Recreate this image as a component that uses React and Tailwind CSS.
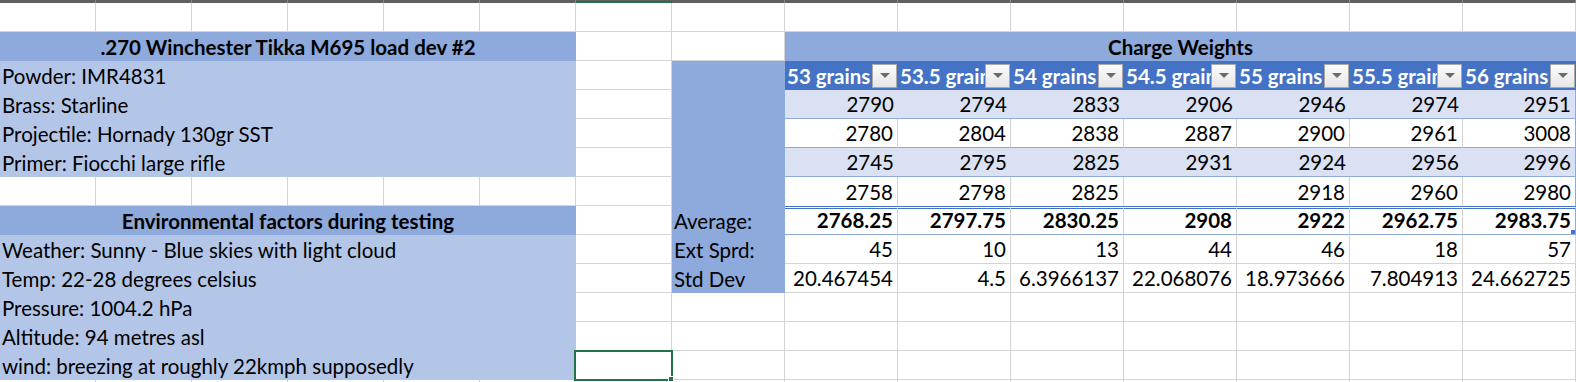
import React from "react";

// sheet geometry: A-G are 96px, H-O are 113px, rows 29px
const gridCols = "grid grid-cols-[repeat(7,96px)_repeat(8,113px)]";
const line = "border-r border-b border-[#d4d4d4]";
const cell = "flex items-end pb-[2px] leading-[24px] whitespace-nowrap overflow-hidden";

const loadInfo = [
  "Powder: IMR4831",
  "Brass: Starline",
  "Projectile: Hornady 130gr SST",
  "Primer: Fiocchi large rifle",
];

const envInfo = [
  "Weather: Sunny - Blue skies with light cloud",
  "Temp: 22-28 degrees celsius",
  "Pressure: 1004.2 hPa",
  "Altitude: 94 metres asl",
  "wind: breezing at roughly 22kmph supposedly",
];

const charges = ["53 grains", "53.5 grains", "54 grains", "54.5 grains", "55 grains", "55.5 grains", "56 grains"];

const shots = [
  ["2790", "2794", "2833", "2906", "2946", "2974", "2951"],
  ["2780", "2804", "2838", "2887", "2900", "2961", "3008"],
  ["2745", "2795", "2825", "2931", "2924", "2956", "2996"],
  ["2758", "2798", "2825", "", "2918", "2960", "2980"],
];

const averages = ["2768.25", "2797.75", "2830.25", "2908", "2922", "2962.75", "2983.75"];
const spreads = ["45", "10", "13", "44", "46", "18", "57"];
const stdDevs = ["20.467454", "4.5", "6.3966137", "22.068076", "18.973666", "7.804913", "24.662725"];

function Blank({ n = 1 }) {
  return Array.from({ length: n }).map((_, i) => <div key={i} className={line} />);
}

function Dropdown() {
  return (
    <div className="self-end shrink-0 w-[25px] h-[24px] mr-px flex items-center justify-center bg-gradient-to-b from-[#fbfbfb] to-[#e6e6e6] border border-[#a9a9a9]">
      <svg width="10" height="6" viewBox="0 0 10 6">
        <path d="M0 0 L10 0 L5 5 Z" fill="#6b6b6b" />
      </svg>
    </div>
  );
}

function HeaderCell({ label }) {
  return (
    <div className={`${cell} bg-[#4472C4] text-white font-bold`}>
      <span className="flex-1 min-w-0 overflow-hidden pl-[2px]">{label}</span>
      <Dropdown />
    </div>
  );
}

function TableRow({ values, banded, last }) {
  return values.map((v, i) => {
    const edge = i === values.length - 1 ? "border-r border-[#8EA9DB]" : banded ? "" : "border-r border-[#d4d4d4]";
    return (
      <div
        key={i}
        className={`${cell} justify-end pr-[4px] ${banded ? "bg-[#D9E1F2]" : "bg-white"} ${last ? "" : "border-b border-b-[#8EA9DB]"} ${edge}`}
      >
        {v}
      </div>
    );
  });
}

function LeftText({ children }) {
  return <div className={`${cell} col-span-6 bg-[#B4C6E7] pl-[2px]`}>{children}</div>;
}

function LeftHeader({ children }) {
  return <div className={`${cell} col-span-6 bg-[#8EA9DB] font-bold justify-center`}>{children}</div>;
}

function HCell({ children }) {
  return <div className={`${cell} bg-[#8EA9DB] pl-[2px]`}>{children}</div>;
}

function PlainValues({ values }) {
  return values.map((v, i) => (
    <div key={i} className={`${cell} ${line} justify-end pr-[4px]`}>
      {v}
    </div>
  ));
}

export default function App() {
  return (
    <div className="w-[1576px] h-[382px] overflow-hidden bg-white text-black text-[20.5px] font-['Lato',sans-serif]">
      {/* column header strip */}
      <div className={gridCols}>
        {Array.from({ length: 15 }).map((_, i) =>
          i === 6 ? (
            <div key={i} className="h-[3px] bg-[#5f5f5f] border-b-2 border-[#217346]" />
          ) : (
            <div key={i} className="h-[3px] bg-[#5f5f5f] border-r border-[#8a8a8a]" />
          )
        )}
      </div>

      <div className={`${gridCols} auto-rows-[29px]`}>
        {/* row 1 */}
        <Blank n={15} />

        {/* row 2 */}
        <LeftHeader>.270 Winchester Tikka M695 load dev #2</LeftHeader>
        <Blank n={2} />
        <div className={`${cell} col-span-7 bg-[#8EA9DB] font-bold justify-center`}>Charge Weights</div>

        {/* row 3 */}
        <LeftText>{loadInfo[0]}</LeftText>
        <Blank />
        <HCell />
        {charges.map((c) => (
          <HeaderCell key={c} label={c} />
        ))}

        {/* rows 4-6 */}
        {shots.slice(0, 3).map((row, r) => (
          <React.Fragment key={r}>
            <LeftText>{loadInfo[r + 1]}</LeftText>
            <Blank />
            <HCell />
            <TableRow values={row} banded={r % 2 === 0} />
          </React.Fragment>
        ))}

        {/* row 7 */}
        <Blank n={7} />
        <HCell />
        <TableRow values={shots[3]} banded={false} last />

        {/* row 8 - totals */}
        <LeftHeader>Environmental factors during testing</LeftHeader>
        <Blank />
        <HCell>Average:</HCell>
        {averages.map((v, i) => (
          <div
            key={i}
            className={`${cell} relative justify-end pr-[4px] font-bold border-t-[3px] border-double border-t-[#4472C4] border-b border-b-[#8EA9DB] ${
              i === 6 ? "border-r border-r-[#8EA9DB]" : "border-r border-r-[#d4d4d4]"
            }`}
          >
            {v}
            {i === 6 && <span className="absolute right-0 bottom-0 w-[4px] h-[4px] bg-[#4472C4]" />}
          </div>
        ))}

        {/* row 9 */}
        <LeftText>{envInfo[0]}</LeftText>
        <Blank />
        <HCell>Ext Sprd:</HCell>
        <PlainValues values={spreads} />

        {/* row 10 */}
        <LeftText>{envInfo[1]}</LeftText>
        <Blank />
        <HCell>Std Dev</HCell>
        <PlainValues values={stdDevs} />

        {/* rows 11-12 */}
        <LeftText>{envInfo[2]}</LeftText>
        <Blank n={9} />
        <LeftText>{envInfo[3]}</LeftText>
        <Blank n={9} />

        {/* row 13 with selected cell */}
        <LeftText>{envInfo[4]}</LeftText>
        <div className={`${line} relative`}>
          <div className="absolute z-10 -left-[2px] -top-px -right-[2px] -bottom-[2px] border-2 border-[#217346]" />
          <div className="absolute z-20 -right-[3px] -bottom-[3px] w-[6px] h-[6px] bg-[#217346] border border-white" />
        </div>
        <Blank n={8} />

        {/* row 14 */}
        <Blank n={15} />
      </div>
    </div>
  );
}
